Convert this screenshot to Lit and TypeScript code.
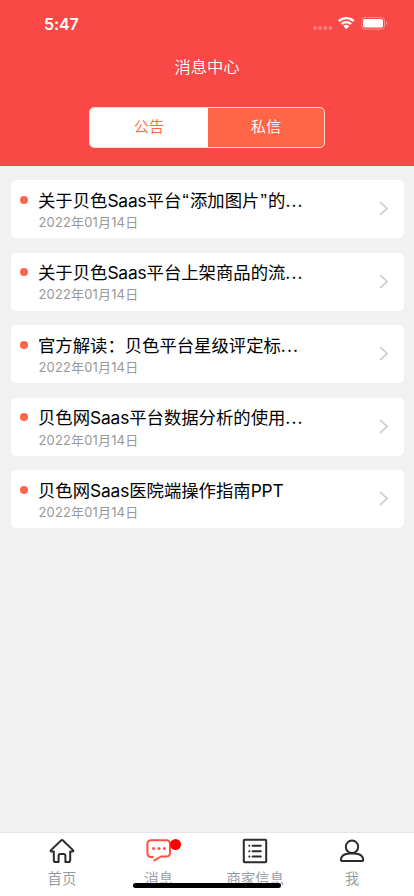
import { LitElement, html, css, svg } from "lit";
import { customElement, property, state } from "lit/decorators.js";
import { classMap } from "lit/directives/class-map.js";

const notices = [
  "关于贝色Saas平台“添加图片”的…",
  "关于贝色Saas平台上架商品的流…",
  "官方解读：贝色平台星级评定标…",
  "贝色网Saas平台数据分析的使用…",
  "贝色网Saas医院端操作指南PPT",
];

const icons = {
  home: svg`<path d="M12.3 2.3Q13 1.7 13.7 2.3L24 12.1Q25 13.2 23.7 13.4H21.2V22.2Q21.2 24 19.4 24H16.4V17.6Q16.4 16 14.8 16H11.2Q9.6 16 9.6 17.6V24H6.6Q4.8 24 4.8 22.2V13.4H2.3Q1 13.2 2 12.1Z"/>`,
  chat: svg`<path d="M7 19H5.2Q1.4 19 1.4 15.2V6Q1.4 2.2 5.2 2.2H20.2Q24 2.2 24 6V14.7Q24 18.5 20.2 18.5H15L8.4 22.4"/><g stroke="none" fill="currentColor"><circle cx="7.6" cy="10.4" r="1.5"/><circle cx="13" cy="10.4" r="1.5"/><circle cx="18.4" cy="10.4" r="1.5"/></g>`,
  list: svg`<rect x="1.8" y="1.8" width="22.4" height="22.4" rx=".8"/><path d="M10.6 7.8h8.2M10.6 13.2h8.2M10.6 18.6h8.2M7.3 7.8h.1M7.3 13.2h.1M7.3 18.6h.1"/>`,
  user: svg`<circle cx="13" cy="8.8" r="6.2"/><path d="M13 15.4H11Q1.9 15.6 1.9 22.1Q1.9 23 2.8 23H23.3Q24.2 23 24.2 22.1Q24.2 15.6 15.1 15.4Z"/>`,
};

@customElement("status-bar")
class StatusBar extends LitElement {
  static styles = css`
    :host { display: flex; justify-content: space-between; align-items: flex-start; height: 48px; padding: 0 26px 0 44px; box-sizing: border-box; color: #fff; }
    .time { font: 600 16px/20px Inter, sans-serif; padding-top: 14px; letter-spacing: -.1px; }
    svg { display: block; margin-top: 15px; }
  `;
  render() {
    return html`<span class="time">5:47</span>
      <svg width="76" height="18" viewBox="0 0 76 18" fill="#fff">
        <g opacity=".3"><circle cx="3" cy="13" r="2"/><circle cx="8.1" cy="13" r="2"/><circle cx="13.3" cy="13" r="2"/><circle cx="18.5" cy="13" r="2"/></g>
        <g fill="none" stroke="#fff" stroke-width="2.3"><path d="M26.8 6.1a11 11 0 0 1 15 0"/><path d="M29.5 9a7 7 0 0 1 9.6 0"/></g>
        <path d="M31.3 11a4.6 4.6 0 0 1 6 0l-3 3.3Z"/>
        <rect x="49.5" y="2.5" width="23" height="11.6" rx="3.2" fill="none" stroke="#fff" opacity=".4"/>
        <rect x="51" y="4" width="20" height="8.6" rx="1.8"/>
        <path d="M74 6.5c1.5.5 1.5 3 0 3.7Z" opacity=".45"/>
      </svg>`;
  }
}

@customElement("notice-card")
class NoticeCard extends LitElement {
  @property() heading = "";
  @property() date = "";
  static styles = css`
    :host { display: flex; height: 58px; box-sizing: border-box; background: #fff; border-radius: 5px; padding-left: 9px; }
    .dot { width: 8px; height: 8px; border-radius: 50%; background: #ff6648; margin-top: 15.5px; flex: none; }
    .body { flex: 1; margin-left: 10.5px; padding-top: 8.4px; white-space: nowrap; }
    .heading { font-size: 17.35px; line-height: 24px; color: #000; font-weight: 400; }
    .latin { letter-spacing: -.15px; }
    .quote { font-family: "Liberation Sans", sans-serif; font-size: 19px; line-height: 1; margin: 0 1.2px; }
    .dots { letter-spacing: 1.1px; }
    .date { font-size: 13px; line-height: 18px; color: #999; margin: .3px 0 0 .5px; letter-spacing: .15px; font-weight: 400; }
    svg { flex: none; margin: 20px 14px 0 0; }
  `;
  private heads() {
    return this.heading.split(/([“”…]|[A-Za-z]+)/).map((part) => {
      if (part === "…") return html`<span class="dots">...</span>`;
      if (/[“”]/.test(part)) return html`<span class="quote">${part}</span>`;
      return /[A-Za-z]/.test(part) ? html`<span class="latin">${part}</span>` : part;
    });
  }
  render() {
    return html`<i class="dot"></i>
      <div class="body"><div class="heading">${this.heads()}</div><div class="date">${this.date}</div></div>
      <svg width="12" height="18" viewBox="0 0 12 18" fill="none" stroke="#c7c7cc" stroke-width="1.6"><path d="m2 2 7 6.5-7 6.5"/></svg>`;
  }
}

@customElement("tab-item")
class TabItem extends LitElement {
  @property() icon: keyof typeof icons = "home";
  @property() label = "";
  @property({ type: Boolean }) active = false;
  static styles = css`
    :host { display: flex; flex-direction: column; align-items: center; width: 96.7px; padding-top: 5px; box-sizing: border-box; }
    .icon { position: relative; height: 26px; color: #2b2b2b; }
    .active { color: #ff5040; }
    svg { display: block; }
    .badge { position: absolute; left: 24px; top: 1px; width: 11px; height: 11px; border-radius: 50%; background: #f00; }
    .label { margin-top: 5px; font-size: 14.4px; line-height: 20px; color: #9297a1; }
  `;
  render() {
    return html`<div class=${classMap({ icon: true, active: this.active })}>
        <svg width="26" height="26" viewBox="0 0 26 26" fill="none" stroke="currentColor" stroke-width="2" stroke-linecap="round" stroke-linejoin="round">${icons[this.icon]}</svg>
        ${this.active ? html`<i class="badge"></i>` : ""}
      </div>
      <span class="label">${this.label}</span>`;
  }
}

@customElement("app-root")
class AppRoot extends LitElement {
  @state() segment = 0;
  static styles = css`
    :host { display: flex; flex-direction: column; position: relative; height: 896px; overflow: hidden; background: #f1f1f1; font-family: Inter, "Noto Sans CJK SC", sans-serif; font-weight: 350; }
    header { flex: none; height: 165.5px; background: #f94845; color: #fff; }
    h1 { margin: 7px 0 0; font-size: 16.3px; line-height: 24px; font-weight: 350; text-align: center; }
    .segments { display: flex; width: 236px; height: 41px; margin: 27.5px auto 0; box-sizing: border-box; border: 1px solid #ffd9d0; border-radius: 5px; overflow: hidden; background: #ff6648; }
    .segment { flex: 1; font-size: 15.2px; line-height: 38px; text-align: center; color: #fff; }
    .segment:first-child { flex: none; width: 118px; }
    .selected { background: #fff; color: #ff6648; }
    main { flex: 1; display: flex; flex-direction: column; gap: 14.55px; padding: 14.7px 10.5px 0; }
    nav { display: flex; justify-content: center; height: 63px; flex: none; background: #fff; border-top: 1px solid #e5e5e5; }
    .indicator { position: absolute; left: 133px; bottom: 8px; width: 148px; height: 5px; border-radius: 3px; background: #000; }
  `;
  render() {
    return html`<header>
        <status-bar></status-bar>
        <h1>消息中心</h1>
        <div class="segments">
          ${["公告", "私信"].map((t, i) => html`<div class=${classMap({ segment: true, selected: this.segment === i })} @click=${() => (this.segment = i)}>${t}</div>`)}
        </div>
      </header>
      <main>${notices.map((n) => html`<notice-card .heading=${n} .date=${"2022年01月14日"}></notice-card>`)}</main>
      <nav>
        <tab-item icon="home" label="首页"></tab-item>
        <tab-item icon="chat" label="消息" active></tab-item>
        <tab-item icon="list" label="商家信息"></tab-item>
        <tab-item icon="user" label="我"></tab-item>
      </nav>
      <div class="indicator"></div>`;
  }
}
